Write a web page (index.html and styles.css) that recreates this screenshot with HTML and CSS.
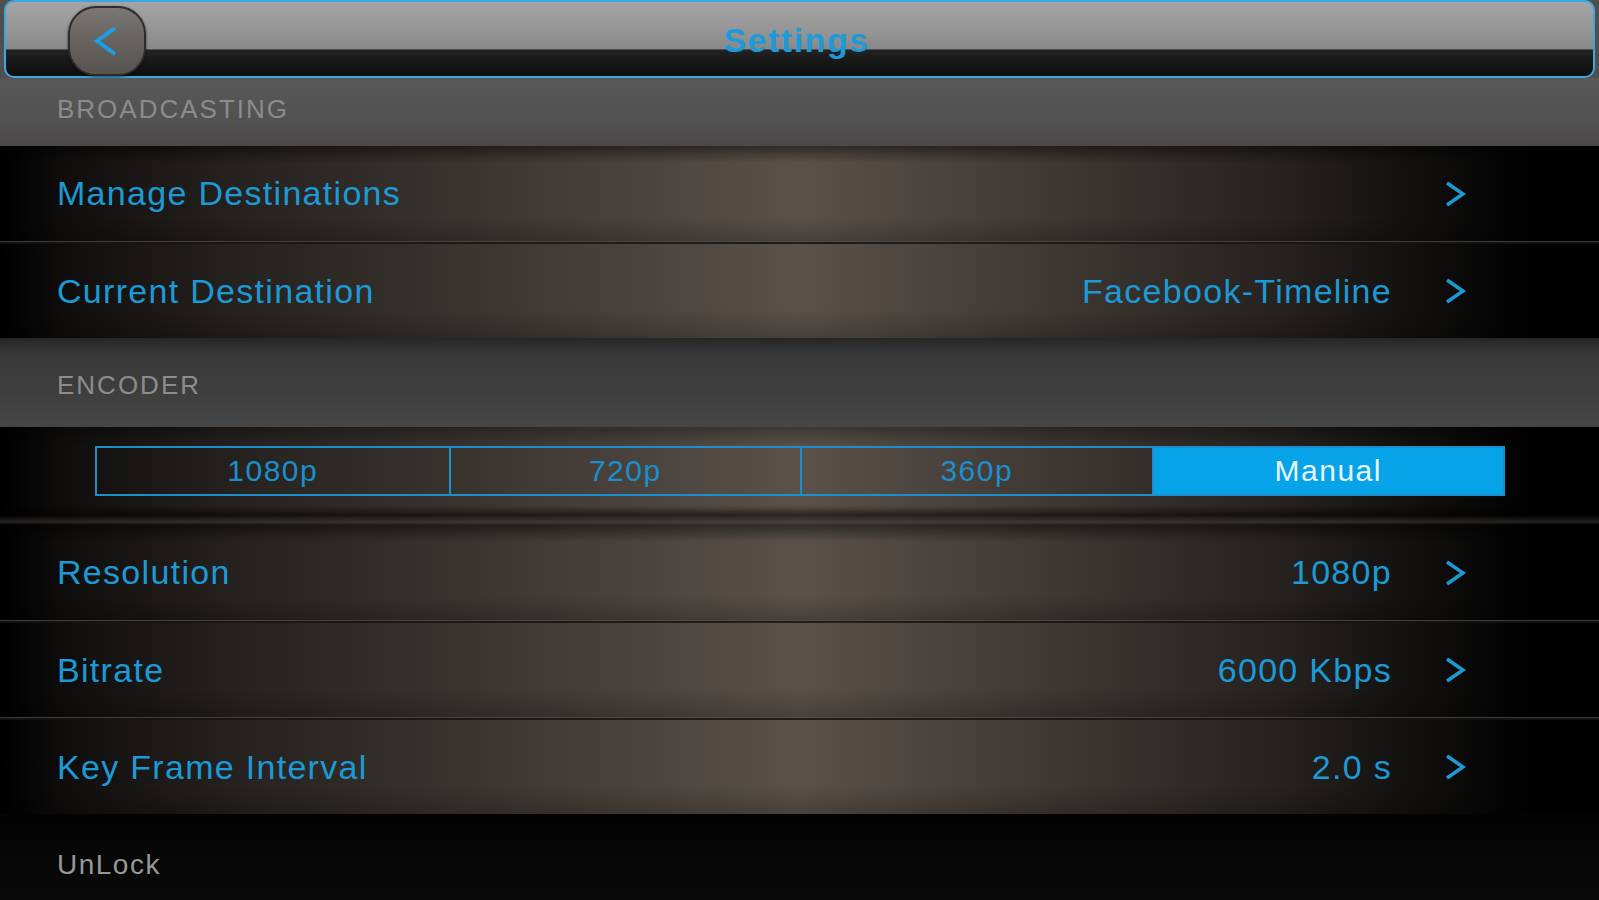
FILE: index.html
```html
<!DOCTYPE html>
<html lang="en">
<head>
  <meta charset="UTF-8" />
  <meta name="viewport" content="width=device-width, initial-scale=1.0" />
  <title>Settings</title>
  <link rel="stylesheet" href="styles.css">
</head>
<body>
  <div class="screen">
    <header class="navbar">
      <button class="back" aria-label="Back">
        <svg viewBox="0 0 32 32" width="32" height="32"><path d="M24 3 L6 16 L24 29" /></svg>
      </button>
      <h1>Settings</h1>
    </header>

    <div class="group-title first">BROADCASTING</div>
    <div class="row top">
      <span class="label">Manage Destinations</span>
      <span class="value"></span>
      <svg class="chev" viewBox="0 0 22 28"><path d="M3 3 L19 14 L3 25" /></svg>
    </div>
    <div class="row">
      <span class="label">Current Destination</span>
      <span class="value">Facebook-Timeline</span>
      <svg class="chev" viewBox="0 0 22 28"><path d="M3 3 L19 14 L3 25" /></svg>
    </div>

    <div class="group-title second">ENCODER</div>
    <div class="seg-row">
      <div class="segmented">
        <div class="seg">1080p</div>
        <div class="seg">720p</div>
        <div class="seg">360p</div>
        <div class="seg active">Manual</div>
      </div>
    </div>
    <div class="row top">
      <span class="label">Resolution</span>
      <span class="value">1080p</span>
      <svg class="chev" viewBox="0 0 22 28"><path d="M3 3 L19 14 L3 25" /></svg>
    </div>
    <div class="row">
      <span class="label">Bitrate</span>
      <span class="value">6000 Kbps</span>
      <svg class="chev" viewBox="0 0 22 28"><path d="M3 3 L19 14 L3 25" /></svg>
    </div>
    <div class="row">
      <span class="label">Key Frame Interval</span>
      <span class="value">2.0 s</span>
      <svg class="chev" viewBox="0 0 22 28"><path d="M3 3 L19 14 L3 25" /></svg>
    </div>

    <div class="footer">UnLock</div>
  </div>
</body>
</html>
```

FILE: styles.css
```css
:root {
  --blue: #1b9ad6;
  --blue-bright: #06a3e8;
  --row-bg: linear-gradient(90deg, #000 0%, #12100f 5%, #26221f 15%, #3b3530 30%, #5a514a 50%, #3e3732 66%, #26221f 80%, #0e0d0c 90%, #000 96%);
  --row-sep: linear-gradient(180deg, rgba(75,72,70,.8) 0, rgba(75,72,70,.8) 1px, rgba(22,20,18,.85) 1px, rgba(22,20,18,.85) 3px, transparent 3px);
}
html, body {
  margin: 0;
  padding: 0;
  background: #000;
}
body {
  font-family: "Liberation Sans", Arial, sans-serif;
  color: var(--blue);
}
.screen {
  width: 1599px;
  height: 900px;
  overflow: hidden;
  display: flex;
  flex-direction: column;
  background: #4f4f4f;
}

/* nav bar */
.navbar {
  height: 78px;
  box-sizing: border-box;
  margin: 0 4px;
  border: 2px solid #3aa8e0;
  border-radius: 10px;
  background: linear-gradient(180deg, #a4a4a4 0%, #979797 35%, #898989 63%, #232323 65%, #171717 82%, #0e0e0e 100%);
  display: flex;
  align-items: center;
}
.navbar h1 {
  flex: 1;
  margin: 0 0 0 -146px;
  padding-top: 2px;
  text-align: center;
  font-size: 34px;
  font-weight: bold;
  letter-spacing: 1.5px;
  color: #1e9ad8;
}
.back {
  width: 78px;
  height: 70px;
  margin-left: 62px;
  margin-top: 4px;
  border: 2px solid #2c2c2c;
  border-radius: 28px;
  background: linear-gradient(180deg, #7a7774 0%, #66625f 50%, #57534f 100%);
  box-shadow: 0 1px 3px rgba(0,0,0,.6);
  display: flex;
  align-items: center;
  justify-content: center;
  padding: 0;
}
.back svg path {
  fill: none;
  stroke: #1aa0e4;
  stroke-width: 4;
}

/* section titles */
.group-title {
  padding-left: 57px;
  font-size: 26px;
  letter-spacing: 2px;
  color: #8c8c8c;
  display: flex;
  align-items: center;
}
.group-title.first {
  height: 68px;
  padding-bottom: 6px;
  box-sizing: border-box;
  background: linear-gradient(180deg, #585858 0%, #535252 60%, #4a4848 100%);
}
.group-title.second {
  height: 89px;
  padding-top: 6px;
  box-sizing: border-box;
  background: linear-gradient(180deg, #262626 0%, #393838 18%, #3f3e3e 60%, #474646 100%);
}

/* rows */
.row {
  height: 97px;
  box-sizing: border-box;
  padding: 3px 133px 0 57px;
  display: flex;
  align-items: center;
  background: var(--row-sep), linear-gradient(180deg, rgba(0,0,0,0) 70%, rgba(0,0,0,.2) 100%), var(--row-bg);
}
.row.top {
  height: 95px;
  padding-top: 0;
  background: linear-gradient(180deg, rgba(0,0,0,.45) 0%, rgba(0,0,0,0) 18%, rgba(0,0,0,0) 75%, rgba(0,0,0,.2) 100%), var(--row-bg);
}
.label {
  flex: 1;
  font-size: 34px;
  letter-spacing: 1.3px;
}
.value {
  font-size: 34px;
  letter-spacing: 1.3px;
  margin-right: 52px;
}
.chev {
  width: 22px;
  height: 28px;
}
.chev path {
  fill: none;
  stroke: var(--blue);
  stroke-width: 3.5;
}

/* segmented control */
.seg-row {
  height: 98px;
  box-sizing: border-box;
  padding: 19px 94px 0 95px;
  background: linear-gradient(180deg, rgba(0,0,0,.3) 0%, rgba(0,0,0,0) 20%, rgba(0,0,0,0) 80%, rgba(0,0,0,.55) 90%, rgba(60,55,52,.6) 97%, rgba(0,0,0,.4) 100%), var(--row-bg);
}
.segmented {
  display: grid;
  grid-template-columns: repeat(4, 1fr);
  height: 50px;
  border: 2px solid #1a8fcb;
  box-sizing: border-box;
}
.seg {
  display: flex;
  align-items: center;
  justify-content: center;
  font-size: 30px;
  letter-spacing: 1.5px;
  color: #1a8fcb;
  border-left: 2px solid #1a8fcb;
}
.seg:first-child { border-left: none; }
.seg.active {
  background: var(--blue-bright);
  color: #e6f4fb;
}

.footer {
  flex: 1;
  padding: 35px 0 0 57px;
  font-size: 28px;
  letter-spacing: 1.5px;
  color: #979797;
  background: linear-gradient(180deg, #030303 0%, #0a0a0a 100%);
}
```
